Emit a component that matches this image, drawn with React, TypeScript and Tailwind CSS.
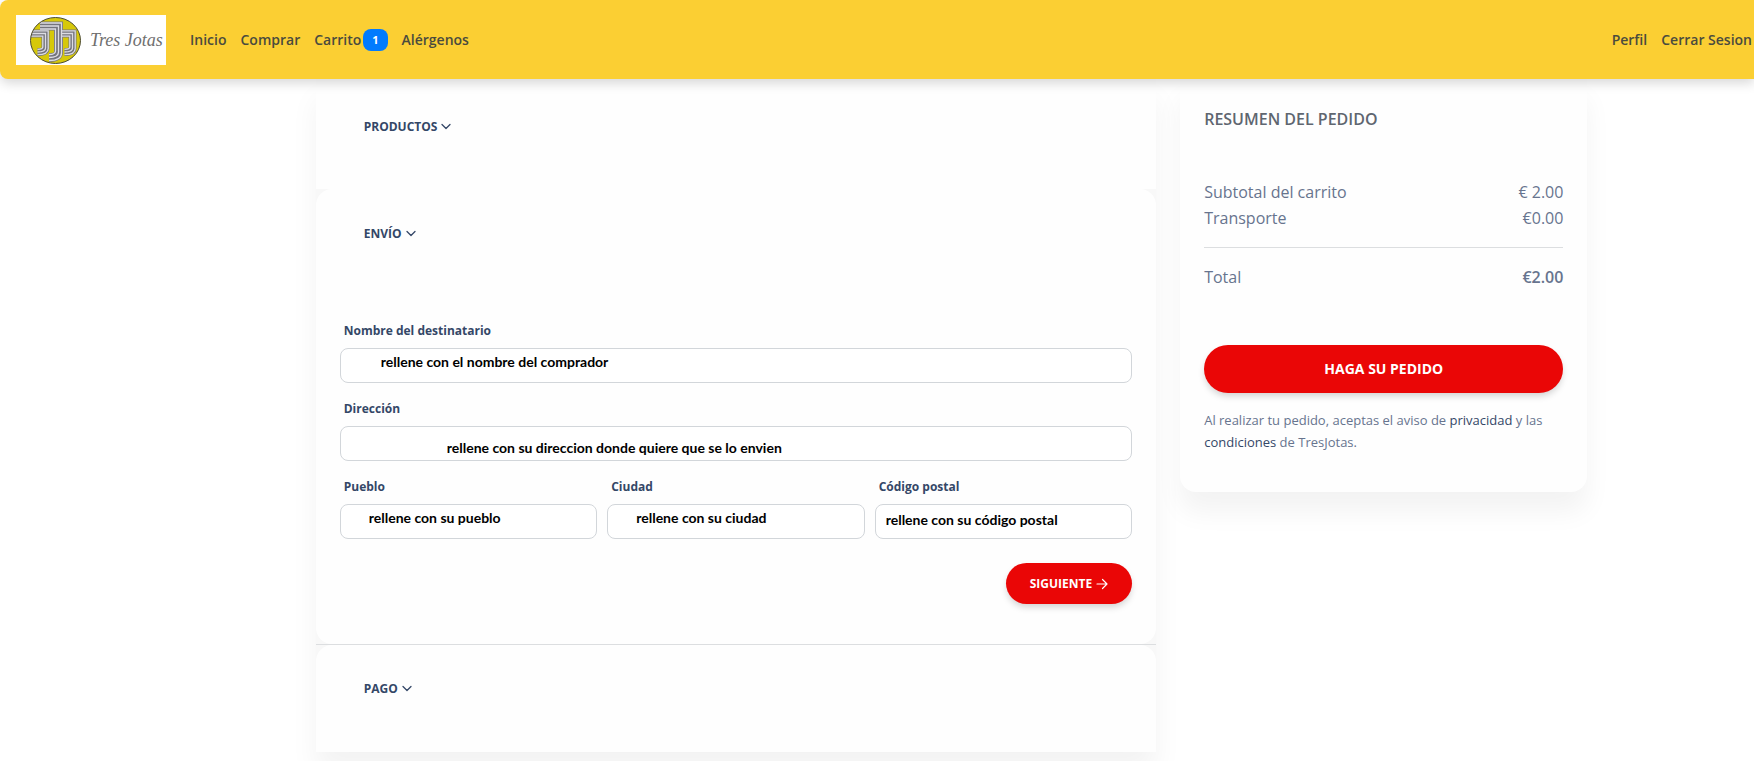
import { ReactNode } from "react";

const navLink = "px-[7px] py-1 hover:text-black";
const fieldBox =
  "block h-[35px] w-full rounded-lg border border-[#d2d6da] bg-white font-['Lato',sans-serif] text-sm font-bold text-black outline-none focus:border-[#e2a9ec]";

function Logo() {
  return (
    <a href="#" aria-label="Tres Jotas" className="flex h-[50px] w-[150px] items-center bg-white pl-3">
      <svg viewBox="0 0 54 50" className="h-[50px] w-[54px] shrink-0" fill="none" aria-hidden="true">
        <defs>
          <clipPath id="disc">
            <ellipse cx="27.5" cy="25.5" rx="25" ry="23" />
          </clipPath>
        </defs>
        <ellipse cx="27.5" cy="25.5" rx="25" ry="23" fill="#d6c80a" />
        <g clipPath="url(#disc)">
          <g stroke="#74747c" strokeWidth="8">
            <path d="M0 18.5H17.5V33Q17.500 37 9.500 37" />
            <path d="M30 18.500H44.500V33Q44.500 37 36.500 37" />
            <path d="M12 11H30.500V37Q30.500 42.500 21 42.500" strokeWidth="9" />
          </g>
          <g stroke="#dcdce2" strokeWidth="1.3">
            <path d="M0 15.800H20.200V33.500Q20.200 39.700 9.500 39.700" />
            <path d="M0 18.500H17.500V33Q17.500 37 9.500 37" />
            <path d="M0 21.200H14.800V32Q14.800 34.300 9.500 34.300" />
            <path d="M34 15.800H47.200V33.500Q47.200 39.700 36.500 39.700" />
            <path d="M34 18.500H44.500V33Q44.500 37 36.500 37" />
            <path d="M34 21.200H41.800V32Q41.800 34.300 36.500 34.300" />
            <path d="M12 8H33.500V38Q33.500 45.500 21 45.500" />
            <path d="M12 11H30.500V37Q30.500 42.500 21 42.500" />
            <path d="M12 14H27.500V36Q27.500 39.500 21 39.500" />
          </g>
        </g>
        <ellipse cx="27.5" cy="25.5" rx="25" ry="23" stroke="#4b4a30" />
      </svg>
      <span className="whitespace-nowrap pl-2 font-['Liberation_Serif',serif] text-lg italic leading-none font-normal text-[#6f6f6f]">
        Tres Jotas
      </span>
    </a>
  );
}

function Chevron() {
  return (
    <svg viewBox="0 0 10 10" className="size-2.5" fill="none" stroke="currentColor" strokeWidth="1.3" aria-hidden="true">
      <path d="M1 2.500 5 6.500 9 2.500" strokeLinecap="round" strokeLinejoin="round" />
    </svg>
  );
}

function SectionToggle({ children }: { children: ReactNode }) {
  return (
    <button type="button" className="flex items-center gap-1 text-xs leading-4 font-bold text-[#344767]">
      {children}
      <Chevron />
    </button>
  );
}

function Field({ id, label, value, pad }: { id: string; label: string; value: string; pad: string }) {
  return (
    <div>
      <label htmlFor={id} className="mb-[7px] ml-1 block text-xs leading-5 font-bold text-[#344767]">
        {label}
      </label>
      <input id={id} type="text" defaultValue={value} className={`${fieldBox} ${pad}`} />
    </div>
  );
}

export default function App() {
  return (
    <div className="min-h-screen overflow-x-hidden bg-white font-['Open_Sans',sans-serif] text-[#67748e]">
      <header className="relative z-10 flex items-center rounded-l-lg bg-[#fbcf33] pt-[15px] pb-3.5 pl-4 text-sm font-semibold text-[#4a4b3e] shadow-[0_4px_12px_rgba(0,0,0,0.16)]">
        <Logo />
        <nav className="flex flex-1 items-center pl-[17px]">
          <a href="#" className={navLink}>Inicio</a>
          <a href="#" className={navLink}>Comprar</a>
          <a href="#" className="flex items-center gap-0.5 px-[7px]">
            Carrito
            <span className="rounded-lg bg-[#017bfe] px-[9px] py-1 text-[11px] leading-[14px] font-bold text-white">1</span>
          </a>
          <a href="#" className={navLink}>Alérgenos</a>
          <a href="#" className={`${navLink} ml-auto`}>Perfil</a>
          <a href="#" className="py-1 pr-0.5 pl-[7px]">Cerrar Sesion</a>
        </nav>
      </header>

      <main className="grid grid-cols-[840fr_407fr] items-start gap-6 pr-[9.5%] pl-[18%]">
        <div className="bg-[#f8f8f8] shadow-[0_20px_27px_rgba(0,0,0,0.05)]">
          <section className="bg-[#fefefe] px-12 pt-10 pb-[54px]">
            <SectionToggle>PRODUCTOS</SectionToggle>
          </section>

          <section className="rounded-2xl bg-[#fefefe] px-6 pt-[37px] pb-10">
            <div className="pl-6">
              <SectionToggle>ENVÍO</SectionToggle>
            </div>
            <form className="pt-[79px]" onSubmit={(e) => e.preventDefault()}>
              <div className="grid gap-4">
                <Field id="nombre" label="Nombre del destinatario" value="rellene con el nombre del comprador" pad="pl-10 pb-2" />
                <Field id="direccion" label="Dirección" value="rellene con su direccion donde quiere que se lo envien" pad="pl-[106px] pt-2" />
                <div className="grid grid-cols-3 gap-2.5">
                  <Field id="pueblo" label="Pueblo" value="rellene con su pueblo" pad="pl-7 pb-2" />
                  <Field id="ciudad" label="Ciudad" value="rellene con su ciudad" pad="pl-7 pb-2" />
                  <Field id="postal" label="Código postal" value="rellene con su código postal" pad="pl-2.5 pb-1" />
                </div>
              </div>
              <div className="flex justify-end pt-6">
                <button type="submit" className="flex items-center gap-1 rounded-full bg-[#ea0606] px-6 py-3 text-xs leading-[17px] font-bold text-white shadow-[0_4px_7px_-1px_rgba(0,0,0,0.18)]">
                  SIGUIENTE
                  <svg viewBox="0 0 12 12" className="size-3" fill="none" stroke="currentColor" strokeWidth="1.2" aria-hidden="true">
                    <path d="M1 6H11M6.500 1.500 11 6 6.500 10.500" strokeLinecap="round" strokeLinejoin="round" />
                  </svg>
                </button>
              </div>
            </form>
          </section>

          <hr className="border-[#dcdee0]" />

          <section className="rounded-t-2xl bg-[#fefefe] px-12 pt-9 pb-[55px]">
            <SectionToggle>PAGO</SectionToggle>
          </section>
        </div>

        <aside className="rounded-b-2xl bg-[#fefefe] px-6 pt-7 pb-[39px] shadow-[0_20px_27px_rgba(0,0,0,0.05)]">
          <h2 className="text-base leading-6 font-semibold text-[#5f6670]">RESUMEN DEL PEDIDO</h2>
          <dl className="pt-12 text-base leading-[26px]">
            <div className="flex justify-between"><dt>Subtotal del carrito</dt><dd>€ 2.00</dd></div>
            <div className="flex justify-between"><dt>Transporte</dt><dd>€0.00</dd></div>
            <div className="mt-4 flex justify-between border-t border-[#dcdee0] pt-4"><dt>Total</dt><dd className="font-semibold">€2.00</dd></div>
          </dl>
          <button type="button" className="mt-[55px] block w-full rounded-full bg-[#ea0606] py-3.5 text-sm leading-5 font-bold text-white shadow-[0_4px_7px_-1px_rgba(0,0,0,0.18)]">
            HAGA SU PEDIDO
          </button>
          <p className="pt-4 text-[13px] leading-[22px]">
            Al realizar tu pedido, aceptas el aviso de <a href="#" className="text-[#344767]">privacidad</a> y las{" "}
            <a href="#" className="text-[#344767]">condiciones</a> de TresJotas.
          </p>
        </aside>
      </main>
    </div>
  );
}
